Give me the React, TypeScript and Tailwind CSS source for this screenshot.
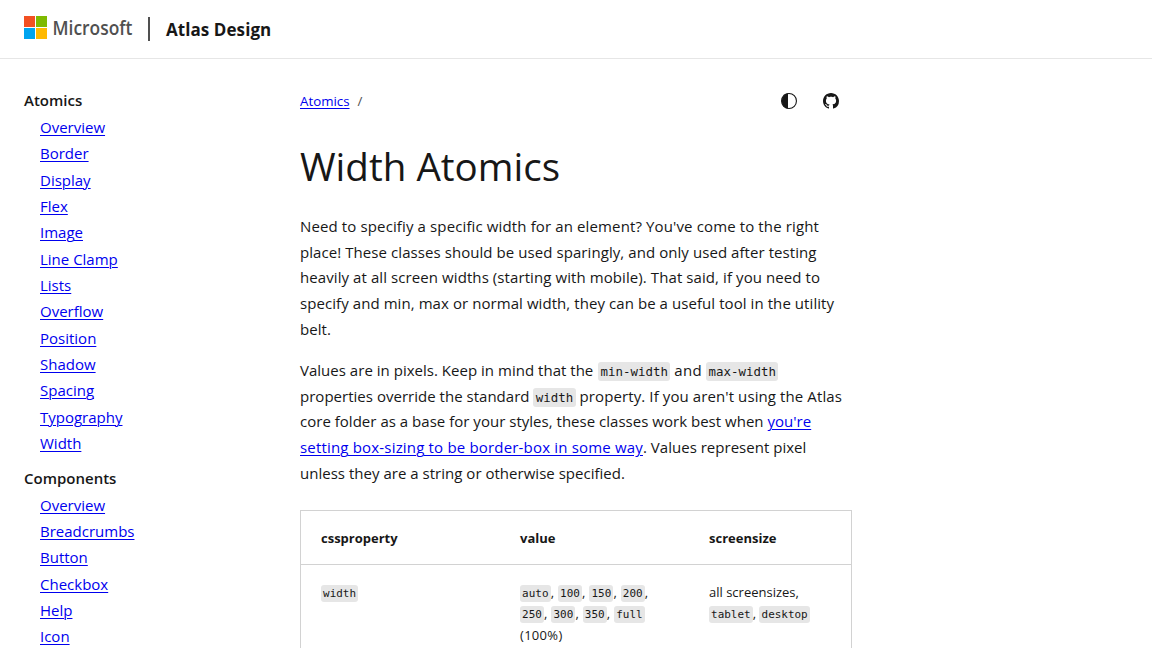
import type { ReactNode } from "react";

const sections = [
  {
    title: "Atomics",
    items: ["Overview", "Border", "Display", "Flex", "Image", "Line Clamp", "Lists", "Overflow", "Position", "Shadow", "Spacing", "Typography", "Width"],
  },
  {
    title: "Components",
    items: ["Overview", "Breadcrumbs", "Button", "Checkbox", "Help", "Icon"],
  },
];

const linkClass = "text-[#0000ee] underline decoration-1 underline-offset-2";

function Code({ children }: { children: ReactNode }) {
  return (
    <code className="rounded-[3px] bg-[#e6e6e6] px-[2.4px] py-[2px] font-['DejaVu_Sans_Mono',monospace] text-[12.42px] leading-none">
      {children}
    </code>
  );
}

function SmallCode({ children }: { children: ReactNode }) {
  return (
    <code className="rounded-[3px] bg-[#e6e6e6] px-[2.1px] py-[2px] font-['DejaVu_Sans_Mono',monospace] text-[10.95px] leading-none">
      {children}
    </code>
  );
}

function Logo() {
  return (
    <svg width="122" height="36" viewBox="0 -6 122 36" role="img" className="block">
      <rect width="11" height="11" fill="#f25022" />
      <rect x="12" width="11" height="11" fill="#7fba00" />
      <rect y="12" width="11" height="11" fill="#00a4ef" />
      <rect x="12" y="12" width="11" height="11" fill="#ffb900" />
      <text x="28.5" y="18.6" textLength="80" lengthAdjust="spacingAndGlyphs" fill="#505050" className="font-['Open_Sans',sans-serif] text-[19.2px] font-semibold">
        Microsoft
      </text>
    </svg>
  );
}

function Header() {
  return (
    <header className="flex h-[59px] items-start border-b border-[#e6e6e6] pl-6">
      <div className="pt-[10px]">
        <Logo />
      </div>
      <div className="mt-[17px] ml-[2px] h-6 w-[2px] bg-[#505050]" />
      <span className="mt-[17px] ml-4 text-[17px] leading-[25px] font-bold tracking-[0.07px]">Atlas Design</span>
    </header>
  );
}

function Sidebar() {
  return (
    <nav className="w-[276px] shrink-0 pt-[28px] pl-6 text-[15px] leading-[26.35px]">
      {sections.map((s) => (
        <div key={s.title} className="mb-[8.2px]">
          <p className="mb-[0.7px] font-semibold">{s.title}</p>
          <ul className="pl-4">
            {s.items.map((i) => (
              <li key={i}>
                <a className={linkClass}>{i}</a>
              </li>
            ))}
          </ul>
        </div>
      ))}
    </nav>
  );
}

export default function App() {
  return (
    <div className="h-[648px] overflow-hidden bg-white font-['Open_Sans',sans-serif] text-[#171717]">
      <Header />
      <div className="flex">
        <Sidebar />
        <main className="ml-6 w-[552px] shrink-0 pt-[32px]">
          <div className="flex h-5 items-center justify-between pr-[13px]">
            <div className="text-[13.3px] leading-5">
              <a className={linkClass}>Atomics</a>
              <span className="ml-2 text-[#505050]">/</span>
            </div>
            <div className="flex gap-[26px]">
              <svg width="16" height="16" viewBox="0 0 16 16">
                <circle cx="8" cy="8" r="7.45" fill="none" stroke="#171717" strokeWidth="1.1" />
                <path d="M7 .2a8 8 0 0 0 0 15.6Z" fill="#171717" />
              </svg>
              <svg width="16" height="16" viewBox="0 0 16 16" fill="#171717">
                <path fillRule="evenodd" d="M8 0C3.58 0 0 3.58 0 8c0 3.54 2.29 6.53 5.47 7.59.4.07.55-.17.55-.38 0-.19-.01-.82-.01-1.49-2.01.37-2.53-.49-2.69-.94-.09-.23-.48-.94-.82-1.13-.28-.15-.68-.52-.01-.53.63-.01 1.08.58 1.23.82.72 1.21 1.87.87 2.33.66.07-.52.28-.87.51-1.07-1.78-.2-3.64-.89-3.64-3.95 0-.87.31-1.59.82-2.15-.08-.2-.36-1.02.08-2.12 0 0 .67-.21 2.2.82.64-.18 1.32-.27 2-.27s1.36.09 2 .27c1.53-1.04 2.2-.82 2.2-.82.44 1.1.16 1.92.08 2.12.51.56.82 1.27.82 2.15 0 3.07-1.87 3.75-3.65 3.95.29.25.54.73.54 1.48 0 1.07-.01 1.93-.01 2.2 0 .21.15.46.55.38A8.01 8.01 0 0 0 16 8c0-4.42-3.58-8-8-8Z" />
              </svg>
            </div>
          </div>

          <h1 className="mt-[29px] text-[38.6px] leading-[53px] font-normal">Width Atomics</h1>

          <p className="mt-[21px] text-[15px] leading-[25.7px] tracking-[0.07px] whitespace-nowrap">
            <span className="tracking-[0.127px]">Need to specifiy a specific width for an element? You've come to the right</span>
            <br />
            place! These classes should be used sparingly, and only used after testing
            <br />
            <span className="tracking-[0.085px]">heavily at all screen widths (starting with mobile). That said, if you need to</span>
            <br />
            specify and min, max or normal width, they can be a useful tool in the utility
            <br />
            belt.
          </p>

          <p className="mt-[15.4px] text-[15px] leading-[25.7px] tracking-[0.02px] whitespace-nowrap">
            Values are in pixels. Keep in mind that the{" "}
            <span className="ml-px">
              <Code>min-width</Code>
            </span>{" "}
            <span className="tracking-[0.3px]">and </span>
            <Code>max-width</Code>
            <br />
            properties override the standard <Code>width</Code> <span className="tracking-[0.1px]">property. If you aren't using the Atlas</span>
            <br />
            core folder as a base for your styles, these classes work best when <a className={linkClass}>you're</a>
            <br />
            <a className={`${linkClass} tracking-[0.18px]`}>setting box-sizing to be border-box in some way</a>. Values represent pixel
            <br />
            unless they are a string or otherwise specified.
          </p>

          <div className="mt-[24px] border border-[#d2d2d2] text-[13px] leading-[21.5px]">
            <div className="grid h-[54px] grid-cols-[199px_189px_1fr] items-center border-b border-[#d2d2d2] pt-px font-bold">
              <span className="pl-5">cssproperty</span>
              <span className="pl-5">value</span>
              <span className="pl-5">screensize</span>
            </div>
            <div className="grid h-[120px] grid-cols-[199px_189px_1fr] pt-[16.4px] whitespace-nowrap">
              <div className="pl-5">
                <SmallCode>width</SmallCode>
              </div>
              <div className="pl-5 tracking-[0.05px] [word-spacing:0.4px]">
                <SmallCode>auto</SmallCode>, <SmallCode>100</SmallCode>, <SmallCode>150</SmallCode>, <SmallCode>200</SmallCode>,
                <br />
                <SmallCode>250</SmallCode>, <SmallCode>300</SmallCode>, <SmallCode>350</SmallCode>, <SmallCode>full</SmallCode>
                <br />
                <span className="tracking-[0.3px]">(100%)</span>
              </div>
              <div className="pl-5 leading-[21px]">
                all screensizes,
                <br />
                <SmallCode>tablet</SmallCode>, <SmallCode>desktop</SmallCode>
              </div>
            </div>
          </div>
        </main>
      </div>
    </div>
  );
}
